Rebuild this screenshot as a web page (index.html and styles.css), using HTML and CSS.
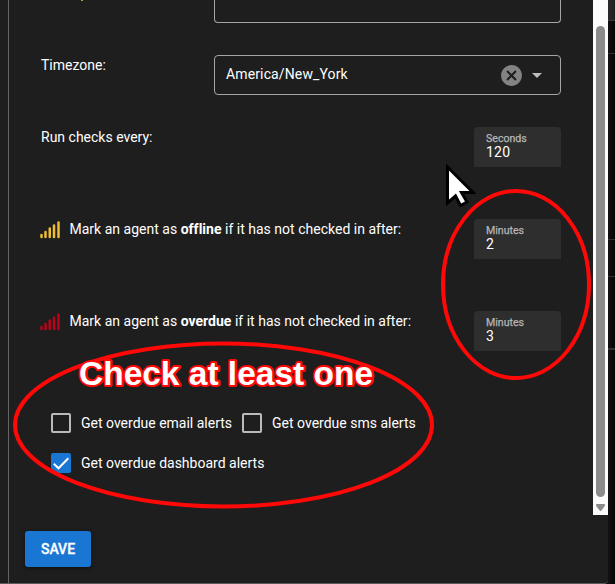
FILE: index.html
```html
<!DOCTYPE html>
<html lang="en">
<head>
<meta charset="utf-8">
<title>Edit agent</title>
<link rel="stylesheet" href="styles.css">
</head>
<body>
<div class="screen">
  <main class="dialog">
    <div class="splitter"></div>
    <form class="panel">
      <div class="row row-top"><span class="tick"></span><div class="select empty"></div></div>
      <div class="row row-zone">
        <span class="label">Timezone:</span>
        <div class="select">
          <span class="value">America/New_York</span>
          <svg class="clear" viewBox="0 0 24 24"><path fill="#838383" d="M12 2C6.47 2 2 6.47 2 12s4.47 10 10 10 10-4.47 10-10S17.53 2 12 2zm5 13.59L15.59 17 12 13.41 8.41 17 7 15.59 10.59 12 7 8.41 8.41 7 12 10.59 15.59 7 17 8.41 13.41 12 17 15.59z"/></svg>
          <svg class="arrow" viewBox="0 0 24 24"><path fill="#bebebe" d="M7 10l5 5 5-5z"/></svg>
        </div>
      </div>
      <div class="row row-checks">
        <span class="label">Run checks every:</span>
        <div class="number"><span class="unit">Seconds</span><span class="amount">120</span></div>
      </div>
      <div class="row row-agent">
        <svg class="signal offline" viewBox="0 0 20 18"><path d="M1.500 16v-2M5.500 16v-5M9.750 16v-8.500M14 16v-11.500M18.500 16v-14.500"/></svg>
        <span class="label">Mark an agent as <b>offline</b> if it has not checked in after:</span>
        <div class="number"><span class="unit">Minutes</span><span class="amount">2</span></div>
      </div>
      <div class="row row-agent">
        <svg class="signal overdue" viewBox="0 0 20 18"><path d="M1.500 16v-2M5.500 16v-5M9.750 16v-8.500M14 16v-11.500M18.500 16v-14.500"/></svg>
        <span class="label">Mark an agent as <b>overdue</b> if it has not checked in after:</span>
        <div class="number"><span class="unit">Minutes</span><span class="amount">3</span></div>
      </div>
      <div class="alerts">
        <div class="option"><span class="box"></span><span>Get overdue email alerts</span></div>
        <div class="option"><span class="box"></span><span>Get overdue sms alerts</span></div>
        <div class="option"><span class="box checked"><svg viewBox="0 0 16 16"><path fill="none" stroke="#fff" stroke-width="2" d="M.8 8.800l4.700 4.500L15.300 3.200"/></svg></span><span>Get overdue dashboard alerts</span></div>
      </div>
      <div class="actions"><button class="save" type="button">SAVE</button></div>
    </form>
    <div class="scrollbar">
      <div class="thumb"></div>
      <svg class="down" viewBox="0 0 9 7"><path fill="#8b8b8b" stroke="#8b8b8b" stroke-linejoin="round" d="M.5.5h8v1.200L5 6.500H4L.5 1.700z"/></svg>
    </div>
  </main>
  <aside class="backdrop"><i class="head"></i><i class="cell a"></i><i class="cell b"></i><i class="cell c"></i><i class="cell d"></i></aside>
  <svg class="annotations" viewBox="0 0 615 584">
    <g fill="none" stroke="#ff0808" stroke-width="4">
      <ellipse cx="516" cy="284.500" rx="73" ry="93.500"/>
      <ellipse cx="223.500" cy="425" rx="208.500" ry="81.500"/>
    </g>
    <text class="note" x="79" y="384.500" textLength="294" lengthAdjust="spacingAndGlyphs">Check at least one</text>
    <path fill="#fff" stroke="#000" stroke-width="3" d="M447.500 167v36l8-7 5 9.500 6.500-3.500-5.500-9.500h11.500z"/>
  </svg>
</div>
</body>
</html>
```

FILE: styles.css
```css
* { box-sizing: border-box; }

body {
  margin: 0;
  background: #080808;
  color: #fff;
  font: 14px/20px Roboto, sans-serif;
}

.screen {
  position: relative;
  display: flex;
  width: 615px;
  height: 584px;
  overflow: hidden;
}

.dialog {
  display: flex;
  width: 608px;
  height: 584px;
  background: #1e1e1e;
  border-bottom: 1px solid #5a5a5a;
  border-radius: 0 0 4px 0;
}

.splitter { width: 9px; border-right: 1px solid #656565; }

.panel { width: 584px; padding: 0 32px 0 16px; }

.row { display: flex; padding-left: 16px; }
.row-top { height: 55px; }
.row-zone { height: 72px; }
.row-checks, .row-agent { height: 92px; }
.row-agent { padding-left: 15px; }
.row-agent .label { letter-spacing: 0.012px; }

.tick { width: 2px; height: 1px; margin-left: 40px; background: #b99c47; }

.select {
  display: flex;
  align-items: center;
  width: 347px;
  height: 40px;
  margin-left: auto;
  padding: 0 11px;
  border: 1px solid #a5a5a5;
  border-radius: 4px;
}
.select.empty { height: 23px; border-top: 0; border-radius: 0 0 4px 4px; }
.value { flex: 1; padding-bottom: 2px; letter-spacing: 0.13px; }
.clear { width: 25px; height: 25px; }
.arrow { width: 24px; height: 24px; margin-left: 1px; }

.number {
  display: flex;
  flex-direction: column;
  width: 87px;
  height: 40px;
  margin-left: auto;
  padding: 5px 12px 3px;
  background: #2e2e2e;
  border-radius: 4px 4px 0 0;
}
.unit {
  color: #b6b6b6;
  font-size: 10.6px;
  line-height: 13px;
  -webkit-text-stroke: 0.25px #b6b6b6;
}
.amount { line-height: 15px; letter-spacing: 0.2px; }

.signal {
  width: 20px;
  height: 18px;
  margin: 2px 9.5px 0 0;
  fill: none;
  stroke-width: 2.5;
  stroke-linecap: round;
}
.offline { stroke: #efbd31; }
.overdue { stroke: #b8041b; }

.alerts {
  display: flex;
  flex-wrap: wrap;
  height: 80px;
  padding-left: 16px;
}
.option { display: flex; align-items: center; height: 40px; padding: 0 10px; gap: 10px; }
.option + .option { padding-left: 0; }
.option:last-child { padding-left: 10px; }
.box { width: 20px; height: 20px; border: 2px solid #bbb; border-radius: 2px; }
.box.checked { background: #1976d2; border-color: #1976d2; }
.box svg { display: block; width: 16px; height: 16px; }

.actions { padding-top: 48px; }
.save {
  display: block;
  width: 66px;
  height: 36px;
  padding: 0 0 1px;
  border: 0;
  border-radius: 3px;
  background: #1976d2;
  color: #fff;
  font: 500 14px/20px Roboto, sans-serif;
  -webkit-text-stroke: 0.3px #fff;
  box-shadow: 0 1px 4px #0008;
}

.scrollbar {
  display: flex;
  flex-direction: column;
  align-items: center;
  width: 15px;
  height: 515px;
  padding-top: 26px;
  background: #fcfcfc;
}
.thumb { width: 9px; height: 471px; border-radius: 5px; background: #8b8b8b; }
.down { width: 9px; height: 7px; margin-top: 7px; }

.backdrop { width: 7px; background: linear-gradient(90deg, #121212, #040404); }
.backdrop i { display: block; }
.head { height: 21px; background: linear-gradient(90deg, #2b2b2b, #202020); border-bottom: 1px solid #3a3a3a; }
.cell { border-bottom: 1px solid #303030; }
.a { height: 33px; }
.b { height: 186px; }
.c { height: 37px; }
.d { height: 73px; border-bottom-width: 2px; }

.annotations { position: absolute; inset: 0; width: 615px; height: 584px; }
.note {
  fill: #fff;
  stroke: #ff0808;
  stroke-width: 4px;
  stroke-linejoin: round;
  paint-order: stroke;
  font: bold 33px "Liberation Sans", Arial, sans-serif;
}
```
